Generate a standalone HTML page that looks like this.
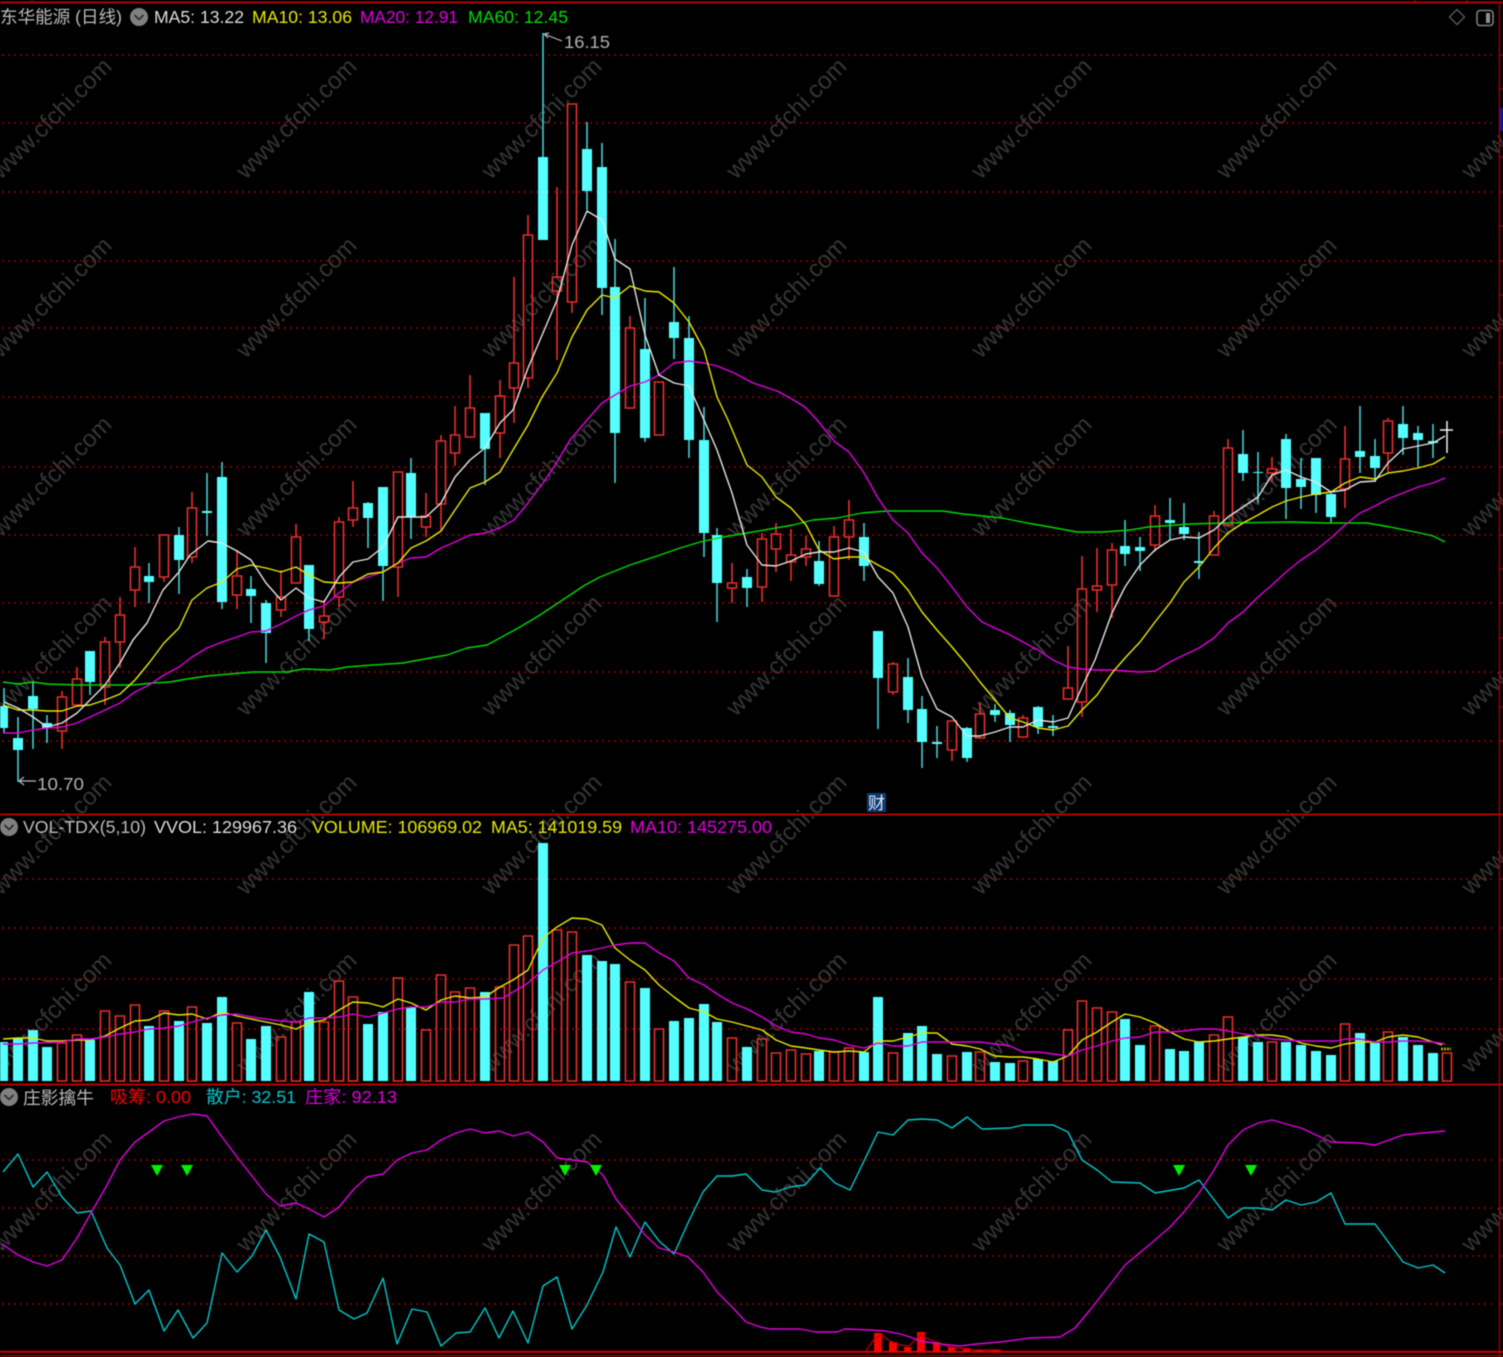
<!DOCTYPE html>
<html lang="zh">
<head>
<meta charset="utf-8">
<title>东华能源 (日线)</title>
<style>
html,body{margin:0;padding:0;background:#000;width:1503px;height:1357px;overflow:hidden}
svg{position:absolute;left:0;top:0;display:block;filter:blur(.45px)}
text{font-family:"Liberation Sans","Noto Sans CJK SC",sans-serif}
.wm text{font-size:24px;fill:#363636;text-anchor:middle}
.t{font-size:17.5px}
.g{stroke:#a00000;stroke-width:1.5;stroke-dasharray:2 4;fill:none}
.l{fill:none;stroke-width:1.4;stroke-linejoin:round}
</style>
</head>
<body>
<svg width="1503" height="1357" viewBox="0 0 1503 1357" xmlns="http://www.w3.org/2000/svg">
<rect width="1503" height="1357" fill="#000"/>

<!-- watermark -->
<g class="wm">
<text transform="translate(57,124) rotate(-45)">www.cfchi.com</text><text transform="translate(302,124) rotate(-45)">www.cfchi.com</text><text transform="translate(547,124) rotate(-45)">www.cfchi.com</text><text transform="translate(792,124) rotate(-45)">www.cfchi.com</text><text transform="translate(1037,124) rotate(-45)">www.cfchi.com</text><text transform="translate(1282,124) rotate(-45)">www.cfchi.com</text><text transform="translate(1527,124) rotate(-45)">www.cfchi.com</text>
<text transform="translate(57,303) rotate(-45)">www.cfchi.com</text><text transform="translate(302,303) rotate(-45)">www.cfchi.com</text><text transform="translate(547,303) rotate(-45)">www.cfchi.com</text><text transform="translate(792,303) rotate(-45)">www.cfchi.com</text><text transform="translate(1037,303) rotate(-45)">www.cfchi.com</text><text transform="translate(1282,303) rotate(-45)">www.cfchi.com</text><text transform="translate(1527,303) rotate(-45)">www.cfchi.com</text>
<text transform="translate(57,482) rotate(-45)">www.cfchi.com</text><text transform="translate(302,482) rotate(-45)">www.cfchi.com</text><text transform="translate(547,482) rotate(-45)">www.cfchi.com</text><text transform="translate(792,482) rotate(-45)">www.cfchi.com</text><text transform="translate(1037,482) rotate(-45)">www.cfchi.com</text><text transform="translate(1282,482) rotate(-45)">www.cfchi.com</text><text transform="translate(1527,482) rotate(-45)">www.cfchi.com</text>
<text transform="translate(57,661) rotate(-45)">www.cfchi.com</text><text transform="translate(302,661) rotate(-45)">www.cfchi.com</text><text transform="translate(547,661) rotate(-45)">www.cfchi.com</text><text transform="translate(792,661) rotate(-45)">www.cfchi.com</text><text transform="translate(1037,661) rotate(-45)">www.cfchi.com</text><text transform="translate(1282,661) rotate(-45)">www.cfchi.com</text><text transform="translate(1527,661) rotate(-45)">www.cfchi.com</text>
<text transform="translate(57,840) rotate(-45)">www.cfchi.com</text><text transform="translate(302,840) rotate(-45)">www.cfchi.com</text><text transform="translate(547,840) rotate(-45)">www.cfchi.com</text><text transform="translate(792,840) rotate(-45)">www.cfchi.com</text><text transform="translate(1037,840) rotate(-45)">www.cfchi.com</text><text transform="translate(1282,840) rotate(-45)">www.cfchi.com</text><text transform="translate(1527,840) rotate(-45)">www.cfchi.com</text>
<text transform="translate(57,1018) rotate(-45)">www.cfchi.com</text><text transform="translate(302,1018) rotate(-45)">www.cfchi.com</text><text transform="translate(547,1018) rotate(-45)">www.cfchi.com</text><text transform="translate(792,1018) rotate(-45)">www.cfchi.com</text><text transform="translate(1037,1018) rotate(-45)">www.cfchi.com</text><text transform="translate(1282,1018) rotate(-45)">www.cfchi.com</text><text transform="translate(1527,1018) rotate(-45)">www.cfchi.com</text>
<text transform="translate(57,1197) rotate(-45)">www.cfchi.com</text><text transform="translate(302,1197) rotate(-45)">www.cfchi.com</text><text transform="translate(547,1197) rotate(-45)">www.cfchi.com</text><text transform="translate(792,1197) rotate(-45)">www.cfchi.com</text><text transform="translate(1037,1197) rotate(-45)">www.cfchi.com</text><text transform="translate(1282,1197) rotate(-45)">www.cfchi.com</text><text transform="translate(1527,1197) rotate(-45)">www.cfchi.com</text>
</g>

<!-- grid -->
<path class="g" d="M2 55H1494M2 123H1494M2 192H1494M2 261H1494M2 328H1494M2 397H1494M2 467H1494M2 535H1494M2 603H1494M2 672H1494M2 741H1494M2 879H1494M2 928H1494M2 979H1494M2 1029H1494M2 1160H1494M2 1208H1494M2 1256H1494M2 1304H1494"/>

<!-- panel borders -->
<path d="M0 2.5H1503M0 814.5H1503M0 1084.5H1503" stroke="#c80000" stroke-width="1.8" fill="none"/>
<path d="M0 1351.8H1503" stroke="#e00000" stroke-width="1.8" fill="none"/>
<path d="M0 1355.8H1503" stroke="#a80000" stroke-width="1.5" fill="none"/>
<path d="M1499.5 2V1357M32 0V2M1415 0V2M1467 0V2M1500 55h3M1500 89h3M1500 123h3M1500 157h3M1500 192h3M1500 226h3M1500 261h3M1500 295h3M1500 328h3M1500 363h3M1500 397h3M1500 432h3M1500 467h3M1500 501h3M1500 535h3M1500 569h3M1500 603h3M1500 638h3M1500 672h3M1500 707h3M1500 741h3M1500 879h3M1500 928h3M1500 979h3M1500 1029h3M1500 1160h3M1500 1208h3M1500 1256h3M1500 1304h3" stroke="#a80000" stroke-width="1.3" fill="none"/>
<rect x="1500" y="108" width="3" height="23" fill="#1018a0"/>

<!-- red candles -->
<path fill="none" stroke="#e82e2e" stroke-width="1.6" d="
M62 691V697M62 731V749M57.5 697h9V731h-9z
M77 667V679M77 705V706M72.5 679h9V705h-9z
M105 637V642M105 687V705M100.5 642h9V687h-9z
M120 597V615M120 642V668M115.5 615h9V642h-9z
M135 547V567M135 590V607M130.5 567h9V590h-9z
M164 577V582M159.500 535h9V577h-9z
M192 492V508M192 557V563M187.500 508h9V557h-9z
M237 550V576M237 595V609M232.500 576h9V595h-9z
M281 570V597M281 610V617M276.500 597h9V610h-9z
M296 524V537M291.500 537h9V583h-9z
M324 600V616M324 622V639M319.500 616h9V622h-9z
M339 517V522M339 597V607M334.500 522h9V597h-9z
M353 481V508M353 520V527M348.500 508h9V520h-9z
M398 567V597M393.500 472h9V567h-9z
M426 493V516M426 527V537M421.500 516h9V527h-9z
M441 435V441M441 504V530M436.500 441h9V504h-9z
M455 406V435M455 453V466M450.500 435h9V453h-9z
M470 375V408M465.500 408h9V437h-9z
M500 380V396M500 433V458M495.500 396h9V433h-9z
M514 277V363M514 388V423M509.500 363h9V388h-9z
M528 215V235M528 378V388M523.500 235h9V378h-9z
M557 187V277M557 291V360M552.500 277h9V291h-9z
M572 302V313M567.500 104h9V302h-9z
M630 316V328M630 408V409M625.500 328h9V408h-9z
M654.500 382h9V435h-9z
M732 563V583M732 588V603M727.500 583h9V588h-9z
M762 533V539M762 587V602M757.500 539h9V587h-9z
M776 523V534M776 549V572M771.500 534h9V549h-9z
M791 529V555M791 562V581M786.500 555h9V562h-9z
M806 536V549M806 557V566M801.500 549h9V557h-9z
M834 526V537M829.500 537h9V596h-9z
M849 500V520M849 537V560M844.500 520h9V537h-9z
M893 662V664M893 692V695M888.500 664h9V692h-9z
M952 750V761M947.500 721h9V750h-9z
M980 703V714M975.500 714h9V738h-9z
M1023 715V718M1023 737V738M1018.500 718h9V737h-9z
M1068 646V688M1063.500 688h9V699h-9z
M1082 556V589M1082 702V717M1077.500 589h9V702h-9z
M1097 548V586M1097 590V612M1092.500 586h9V590h-9z
M1112 543V550M1112 585V618M1107.500 550h9V585h-9z
M1155 505V516M1155 545V552M1150.500 516h9V545h-9z
M1214 511V516M1209.500 516h9V555h-9z
M1228 439V448M1228 525V527M1223.500 448h9V525h-9z
M1272 457V469M1272 473V482M1267.500 469h9V473h-9z
M1345 426V459M1345 489V508M1340.500 459h9V489h-9z
M1388 418V421M1388 453V472M1383.500 421h9V453h-9z"/>

<!-- cyan wicks -->
<path fill="none" stroke="#45cdd0" stroke-width="1.6" d="M4 688V733M18 717V782M33 681V749M47 715V743M90 651V695M149 563V603M179 527V594M207 473V536M222 462V609M251 576V623M266 600V663M309 565V641M368 502V548M383 487V601M411 458V539M485 413V485M543 33V240M587 122V210M602 143V315M615 239V483M645 298V442M674 267V359M689 316V458M704 407V557M717 528V622M747 569V607M819 541V586M864 523V581M878 631V729M908 658V723M922 696V768M937 726V758M967 727V762M995 704V722M1010 710V742M1038 706V734M1053 715V736M1125 520V566M1140 537V571M1170 498V540M1184 503V540M1199 532V579M1243 430V481M1258 452V503M1286 434V519M1301 458V509M1316 458V513M1331 493V523M1360 406V473M1375 439V482M1403 406V455M1418 426V467M1433 424V458"/>
<!-- cyan bodies -->
<path fill="#55ffff" d="M-2 706h10V728h-10zM13 738h10V750h-10zM28 696h10V709h-10zM42 723h10V728h-10zM85 651h10V682h-10zM144 576h10V582h-10zM174 535h10V560h-10zM202 511h10V513h-10zM217 477h10V602h-10zM246 589h10V596h-10zM261 603h10V633h-10zM304 565h10V629h-10zM363 503h10V518h-10zM378 487h10V566h-10zM406 473h10V517h-10zM480 413h10V449h-10zM538 157h10V240h-10zM582 149h10V191h-10zM597 167h10V288h-10zM610 287h10V433h-10zM640 349h10V438h-10zM669 322h10V338h-10zM684 338h10V440h-10zM699 440h10V533h-10zM712 535h10V583h-10zM742 577h10V588h-10zM814 561h10V584h-10zM859 537h10V566h-10zM873 631h10V678h-10zM903 677h10V710h-10zM917 709h10V742h-10zM932 742h10V744h-10zM962 728h10V758h-10zM990 710h10V715h-10zM1005 713h10V725h-10zM1033 707h10V727h-10zM1048 726h10V728h-10zM1120 546h10V554h-10zM1135 547h10V551h-10zM1165 520h10V523h-10zM1179 527h10V534h-10zM1194 561h10V563h-10zM1238 454h10V473h-10zM1253 472h10V473h-10zM1281 439h10V488h-10zM1296 479h10V487h-10zM1311 458h10V495h-10zM1326 494h10V517h-10zM1355 451h10V457h-10zM1370 456h10V468h-10zM1398 424h10V438h-10zM1413 433h10V440h-10zM1428 441h10V443h-10z"/>
<!-- last bar cross -->
<path fill="none" stroke="#f0f0f0" stroke-width="1.5" d="M1447 421V453M1440 430H1453"/>

<!-- MA lines main -->
<polyline class="l" stroke="#00d800" points="3,682 18,684 33,682 47,684 77,685 105,685 133,685 153,683 170,682 187,679 207,676 230,674 253,672 287,672 303,669 330,670 347,667 373,665 403,663 430,658 447,655 467,648 487,645 500,638 520,627 540,615 570,595 585,585 600,577 630,565 660,555 680,548 700,542 723,537 747,533 770,529 793,525 813,520 837,518 862,513 887,511 943,511 963,514 1002,518 1027,523 1050,527 1077,532 1103,532 1130,530 1148,527 1190,524 1223,523 1293,522 1325,523 1367,523 1390,527 1420,533 1433,536 1445,542"/>
<polyline class="l" stroke="#e000e0" points="3,733 18,733 33,730 47,728 62,727 77,723 90,717 105,710 120,703 135,692 149,685 164,675 179,667 192,657 207,648 222,642 237,637 251,632 266,631 281,624 296,616 309,610 324,606 339,593 353,582 368,577 383,572 398,563 411,558 426,557 441,548 455,542 470,535 485,533 500,528 514,520 528,503 543,483 557,462 570,440 587,420 602,403 615,395 630,386 645,382 659,375 674,363 689,361 704,363 717,366 734,373 753,383 777,391 790,398 805,407 817,420 835,442 849,452 864,473 878,498 893,520 908,533 922,553 937,568 952,587 967,607 982,622 995,628 1010,635 1023,642 1038,650 1053,660 1068,667 1082,669 1097,670 1112,670 1125,671 1140,672 1155,671 1170,662 1184,655 1199,648 1214,638 1228,623 1243,612 1258,597 1272,585 1286,572 1301,560 1316,550 1331,538 1345,525 1360,513 1375,506 1388,499 1403,493 1418,487 1433,483 1445,478"/>
<polyline class="l" stroke="#e8e800" points="3,705 18,710 33,710 47,711 62,711 77,706 90,705 105,700 120,694 135,680 149,663 164,643 179,628 192,600 207,588 222,582 237,569 251,565 266,568 281,572 296,567 309,575 324,582 339,583 353,582 368,574 383,572 398,563 411,548 426,541 441,531 455,510 470,488 485,482 500,472 513,450 528,425 542,397 557,373 572,337 587,310 602,295 615,298 630,286 645,291 659,292 674,303 689,322 704,350 717,397 728,420 747,465 762,477 776,497 791,508 806,525 819,550 834,559 849,557 864,557 878,565 893,573 908,590 922,612 937,630 952,647 967,665 980,682 995,700 1010,718 1023,722 1038,728 1053,730 1068,726 1082,710 1097,695 1112,673 1125,658 1140,642 1155,622 1170,603 1184,582 1199,567 1214,548 1228,533 1243,523 1258,515 1272,507 1286,501 1301,497 1316,494 1331,492 1345,483 1360,477 1375,479 1388,473 1403,471 1418,468 1433,464 1445,457"/>
<polyline class="l" stroke="#e4e4e4" points="4,702 18,708 33,717 47,727 62,723 77,713 90,700 105,685 120,663 133,640 147,623 163,590 179,572 190,555 208,541 222,543 237,551 251,560 266,583 281,600 296,588 309,598 324,602 339,577 353,562 368,559 383,547 398,517 411,517 426,517 441,503 455,477 470,460 485,448 500,423 513,410 528,368 543,333 557,300 572,245 587,211 602,220 615,259 630,269 645,335 659,375 674,383 689,386 704,420 717,450 732,493 747,545 762,565 776,566 791,561 806,554 819,552 834,552 849,548 864,552 878,577 893,593 908,627 922,677 937,709 952,717 967,736 980,736 995,732 1010,727 1023,727 1038,720 1053,722 1068,718 1082,687 1095,660 1112,613 1125,587 1140,565 1155,550 1170,540 1184,537 1199,538 1214,530 1228,517 1243,507 1258,497 1272,475 1286,470 1301,477 1316,482 1331,492 1345,490 1360,482 1375,481 1388,463 1403,449 1418,446 1433,443 1445,436"/>

<!-- hi / lo labels -->
<path fill="none" stroke="#b8b8b8" stroke-width="1.2" d="M544 34L562 41M544 34l5-1M544 34l4 4M19 781H36M19 781l5-4M19 781l5 4"/>
<text x="564" y="48" class="t" fill="#b0b0b0" textLength="46" lengthAdjust="spacingAndGlyphs">16.15</text>
<text x="37" y="790" class="t" fill="#b0b0b0" textLength="47" lengthAdjust="spacingAndGlyphs">10.70</text>

<!-- 财 badge -->
<rect x="867" y="793" width="19" height="19" rx="1" fill="#0f3a6e"/>
<text x="868" y="809" font-size="17" fill="#dfe8ff">财</text>

<!-- volume red -->
<path fill="none" stroke="#e82e2e" stroke-width="1.6" d="M57.500 1043h9V1081h-9zM72.500 1035h9V1081h-9zM100.500 1011h9V1081h-9zM115.500 1016h9V1081h-9zM130.500 1005h9V1081h-9zM159.500 1011h9V1081h-9zM187.500 1007h9V1081h-9zM232.500 1023h9V1081h-9zM276.500 1037h9V1081h-9zM291.500 1022h9V1081h-9zM319.500 1022h9V1081h-9zM334.500 981h9V1081h-9zM348.500 997h9V1081h-9zM393.500 978h9V1081h-9zM421.500 1030h9V1081h-9zM436.500 975h9V1081h-9zM450.500 992h9V1081h-9zM465.500 988h9V1081h-9zM495.500 987h9V1081h-9zM509.500 945h9V1081h-9zM523.500 936h9V1081h-9zM552.500 930h9V1081h-9zM567.500 932h9V1081h-9zM625.500 982h9V1081h-9zM654.500 1029h9V1081h-9zM727.500 1038h9V1081h-9zM757.500 1039h9V1081h-9zM771.500 1053h9V1081h-9zM786.500 1050h9V1081h-9zM801.500 1054h9V1081h-9zM829.500 1052h9V1081h-9zM844.500 1048h9V1081h-9zM888.500 1053h9V1081h-9zM947.500 1056h9V1081h-9zM975.500 1052h9V1081h-9zM1018.500 1061h9V1081h-9zM1063.500 1030h9V1081h-9zM1077.500 1001h9V1081h-9zM1092.500 1008h9V1081h-9zM1107.500 1012h9V1081h-9zM1150.500 1026h9V1081h-9zM1209.500 1035h9V1081h-9zM1223.500 1017h9V1081h-9zM1267.500 1042h9V1081h-9zM1340.500 1024h9V1081h-9zM1383.500 1032h9V1081h-9zM1442.500 1053h9V1081h-9z"/>
<!-- volume cyan -->
<path fill="#55ffff" d="M-2 1042h10V1081h-10zM13 1038h10V1081h-10zM28 1030h10V1081h-10zM42 1047h10V1081h-10zM85 1040h10V1081h-10zM144 1026h10V1081h-10zM174 1021h10V1081h-10zM202 1023h10V1081h-10zM217 997h10V1081h-10zM246 1039h10V1081h-10zM261 1026h10V1081h-10zM304 992h10V1081h-10zM363 1024h10V1081h-10zM378 1012h10V1081h-10zM406 1007h10V1081h-10zM480 992h10V1081h-10zM538 843h10V1081h-10zM582 955h10V1081h-10zM597 961h10V1081h-10zM610 964h10V1081h-10zM640 988h10V1081h-10zM669 1021h10V1081h-10zM684 1018h10V1081h-10zM699 1004h10V1081h-10zM712 1022h10V1081h-10zM742 1047h10V1081h-10zM814 1051h10V1081h-10zM859 1052h10V1081h-10zM873 997h10V1081h-10zM903 1033h10V1081h-10zM917 1026h10V1081h-10zM932 1054h10V1081h-10zM962 1052h10V1081h-10zM990 1062h10V1081h-10zM1005 1063h10V1081h-10zM1033 1059h10V1081h-10zM1048 1061h10V1081h-10zM1120 1019h10V1081h-10zM1135 1045h10V1081h-10zM1165 1049h10V1081h-10zM1179 1051h10V1081h-10zM1194 1042h10V1081h-10zM1238 1037h10V1081h-10zM1253 1042h10V1081h-10zM1281 1042h10V1081h-10zM1296 1045h10V1081h-10zM1311 1051h10V1081h-10zM1326 1055h10V1081h-10zM1355 1033h10V1081h-10zM1370 1043h10V1081h-10zM1398 1037h10V1081h-10zM1413 1045h10V1081h-10zM1428 1053h10V1081h-10z"/>
<path d="M1441 1049h10" stroke="#a0a000" stroke-width="3" stroke-dasharray="2 1" fill="none"/>

<!-- volume MA -->
<polyline class="l" stroke="#e8e800" points="3,1039 18,1038 33,1038 47,1041 62,1041 77,1040 90,1040 105,1036 120,1028 135,1021 149,1020 164,1013 179,1015 192,1014 207,1019 222,1012 237,1016 251,1019 266,1022 281,1025 296,1029 309,1023 324,1020 339,1010 353,1002 368,1003 383,1007 398,999 411,1003 426,1010 441,1000 455,996 470,998 485,997 500,987 513,980 528,970 543,938 557,927 572,918 587,919 602,925 615,948 630,960 645,970 659,985 674,997 689,1008 704,1012 717,1019 732,1022 747,1026 762,1030 776,1040 791,1046 806,1048 819,1050 834,1052 849,1051 864,1052 878,1041 893,1041 908,1037 922,1033 937,1033 952,1044 967,1046 980,1049 995,1056 1010,1057 1023,1057 1038,1059 1053,1062 1068,1056 1082,1040 1097,1032 1112,1022 1125,1014 1140,1017 1155,1023 1170,1032 1184,1039 1199,1042 1214,1041 1228,1039 1243,1037 1258,1035 1272,1035 1286,1037 1301,1043 1316,1046 1331,1048 1345,1044 1360,1042 1375,1042 1388,1037 1403,1035 1418,1037 1433,1042 1442,1045"/>
<polyline class="l" stroke="#e000e0" points="3,1044 18,1044 33,1043 62,1042 77,1039 90,1039 105,1037 120,1034 135,1032 149,1029 164,1028 179,1026 192,1022 207,1018 222,1015 237,1014 251,1017 266,1019 281,1021 296,1022 309,1018 324,1018 339,1017 353,1014 368,1017 383,1013 398,1009 411,1007 426,1007 441,1002 455,1002 470,999 485,999 503,998 513,992 528,983 543,970 557,962 572,953 587,951 602,948 615,945 630,943 645,943 659,953 674,961 689,978 704,985 717,994 732,1003 747,1009 762,1017 776,1026 791,1032 806,1034 819,1038 834,1040 849,1045 864,1048 878,1043 893,1046 908,1046 922,1042 952,1042 980,1042 995,1044 1010,1046 1023,1052 1038,1052 1053,1054 1068,1056 1082,1050 1097,1046 1112,1041 1125,1038 1140,1037 1155,1032 1170,1032 1184,1031 1199,1029 1214,1029 1228,1031 1243,1034 1258,1036 1272,1039 1286,1040 1301,1041 1337,1041 1345,1039 1360,1039 1375,1042 1388,1042 1403,1041 1418,1041 1433,1042 1445,1044"/>

<!-- bottom panel red bars -->
<path fill="#ff0000" d="M874 1333h8V1352h-8zM889 1342h8V1352h-8zM904 1347h7V1352h-7zM917 1332h8V1352h-8zM933 1342h7V1352h-7zM948 1347h7V1352h-7zM963 1348h7V1352h-7zM976 1350h7V1352h-7zM991 1350h8V1352h-8z"/>
<polyline fill="none" stroke="#c00000" stroke-width="1.2" points="865,1352 875,1338 882,1335 888,1340 900,1345 909,1346 920,1335 935,1342 950,1347 975,1350 1000,1350 1003,1352"/>

<!-- cyan oscillator -->
<polyline class="l" stroke="#00c8cc" points="3,1172 18,1154 33,1187 47,1172 62,1197 77,1213 91,1211 107,1248 120,1265 135,1304 149,1290 164,1331 178,1310 193,1338 207,1323 222,1253 237,1272 252,1256 266,1230 280,1257 296,1299 309,1234 324,1242 339,1310 354,1319 367,1313 383,1278 397,1344 412,1309 427,1312 441,1346 456,1333 470,1332 485,1308 499,1338 513,1311 528,1343 543,1286 557,1277 572,1329 587,1305 603,1272 616,1227 630,1257 645,1222 659,1241 674,1254 688,1223 703,1192 717,1176 732,1176 746,1174 762,1190 775,1192 790,1187 805,1185 820,1168 835,1183 850,1190 878,1132 893,1135 908,1120 922,1119 937,1120 952,1128 967,1117 982,1129 1010,1128 1023,1125 1053,1125 1068,1132 1082,1160 1097,1170 1112,1182 1140,1183 1155,1193 1184,1188 1199,1180 1228,1218 1243,1208 1258,1208 1272,1210 1286,1200 1301,1205 1316,1202 1331,1193 1345,1224 1375,1224 1403,1262 1418,1268 1433,1265 1445,1273"/>
<!-- magenta oscillator -->
<polyline class="l" stroke="#e000e0" points="2,1244 18,1255 33,1262 47,1266 62,1260 77,1238 91,1213 107,1185 120,1160 135,1142 149,1132 164,1121 178,1117 193,1114 207,1116 222,1137 237,1157 252,1176 266,1194 280,1206 296,1203 309,1209 324,1217 339,1207 354,1189 367,1177 383,1174 397,1160 412,1153 427,1150 441,1140 456,1133 470,1129 485,1133 499,1131 513,1136 528,1132 543,1142 557,1158 572,1160 587,1162 603,1175 616,1199 630,1216 645,1235 659,1248 674,1252 688,1257 703,1272 717,1292 732,1307 746,1322 760,1327 770,1329 800,1329 815,1332 837,1332 845,1329 870,1330 885,1331 900,1334 910,1337 920,1341 940,1344 960,1346 977,1344 1000,1342 1030,1338 1060,1337 1075,1328 1090,1310 1112,1282 1125,1265 1155,1240 1170,1227 1184,1212 1199,1193 1214,1170 1228,1145 1243,1130 1258,1123 1272,1120 1286,1124 1301,1128 1316,1135 1331,1142 1360,1143 1375,1145 1403,1135 1433,1132 1445,1131"/>
<!-- green triangles -->
<path fill="#00f000" d="M151 1165h12l-6 11zM181 1165h12l-6 11zM559 1165h12l-6 11zM590 1165h12l-6 11zM1173 1165h12l-6 11zM1245 1165h12l-6 11z"/>

<!-- header text -->
<text x="0" y="23" class="t" fill="#bcbcbc" textLength="122" lengthAdjust="spacingAndGlyphs">东华能源 (日线)</text>
<circle cx="139" cy="17" r="9" fill="#808080"/><path d="M134.500 15l4.500 4.500 4.500-4.500" fill="none" stroke="#2a2a2a" stroke-width="1.6"/>
<text x="154" y="23" class="t" fill="#dcdcdc" textLength="90" lengthAdjust="spacingAndGlyphs">MA5: 13.22</text>
<text x="252" y="23" class="t" fill="#e8e800" textLength="100" lengthAdjust="spacingAndGlyphs">MA10: 13.06</text>
<text x="360" y="23" class="t" fill="#e000e0" textLength="98" lengthAdjust="spacingAndGlyphs">MA20: 12.91</text>
<text x="468" y="23" class="t" fill="#00dc00" textLength="100" lengthAdjust="spacingAndGlyphs">MA60: 12.45</text>

<!-- top right icons -->
<path d="M1457 9.500l7.500 7.500-7.500 7.500-7.500-7.500z" fill="none" stroke="#666" stroke-width="1.2"/>
<rect x="1477" y="10.500" width="16" height="15" rx="3" fill="none" stroke="#808080" stroke-width="1.6"/>
<rect x="1486" y="13" width="4" height="10" fill="#909090"/>

<!-- volume header -->
<circle cx="9" cy="827" r="9" fill="#808080"/><path d="M4.500 825l4.500 4.500 4.500-4.500" fill="none" stroke="#2a2a2a" stroke-width="1.6"/>
<text x="23" y="833" class="t" fill="#bcbcbc" textLength="123" lengthAdjust="spacingAndGlyphs">VOL-TDX(5,10)</text>
<text x="154" y="833" class="t" fill="#dcdcdc" textLength="143" lengthAdjust="spacingAndGlyphs">VVOL: 129967.36</text>
<text x="312" y="833" class="t" fill="#e8e800" textLength="170" lengthAdjust="spacingAndGlyphs">VOLUME: 106969.02</text>
<text x="491" y="833" class="t" fill="#e8e800" textLength="131" lengthAdjust="spacingAndGlyphs">MA5: 141019.59</text>
<text x="630" y="833" class="t" fill="#e000e0" textLength="142" lengthAdjust="spacingAndGlyphs">MA10: 145275.00</text>

<!-- bottom header -->
<circle cx="9" cy="1097" r="9" fill="#808080"/><path d="M4.500 1095l4.500 4.500 4.500-4.500" fill="none" stroke="#2a2a2a" stroke-width="1.6"/>
<text x="23" y="1104" class="t" fill="#bcbcbc" textLength="71" lengthAdjust="spacingAndGlyphs">庄影擒牛</text>
<text x="110" y="1103" class="t" fill="#ff0000" textLength="81" lengthAdjust="spacingAndGlyphs">吸筹: 0.00</text>
<text x="206" y="1103" class="t" fill="#00c8cc" textLength="90" lengthAdjust="spacingAndGlyphs">散户: 32.51</text>
<text x="305" y="1103" class="t" fill="#e000e0" textLength="92" lengthAdjust="spacingAndGlyphs">庄家: 92.13</text>
</svg>
</body>
</html>
